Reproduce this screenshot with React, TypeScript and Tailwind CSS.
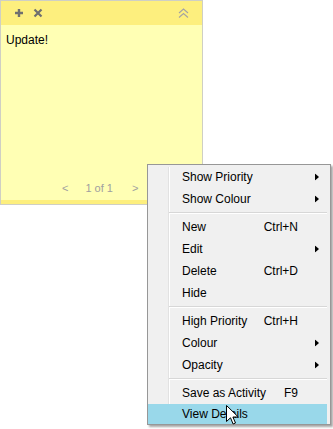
import React from 'react';

type MenuItem = { label: string; shortcut?: string; submenu?: boolean; active?: boolean } | 'sep';

const items: MenuItem[] = [
  { label: 'Show Priority', submenu: true },
  { label: 'Show Colour', submenu: true },
  'sep',
  { label: 'New', shortcut: 'Ctrl+N' },
  { label: 'Edit', submenu: true },
  { label: 'Delete', shortcut: 'Ctrl+D' },
  { label: 'Hide' },
  'sep',
  { label: 'High Priority', shortcut: 'Ctrl+H' },
  { label: 'Colour', submenu: true },
  { label: 'Opacity', submenu: true },
  'sep',
  { label: 'Save as Activity', shortcut: 'F9' },
  { label: 'View Details', active: true },
];

const StickyNote = () => (
  <div className="w-[203px] h-[205px] border border-[#cfcfc4] flex flex-col">
    {/* header bar */}
    <div className="h-[24px] bg-[#fdef7e] flex items-center px-[12px] shrink-0">
      <svg width="10" height="10" viewBox="0 0 10 10" className="ml-[1px]">
        <path d="M5 1v8M1 5h8" stroke="#6f6f6f" strokeWidth="2.4" />
      </svg>
      <svg width="10" height="10" viewBox="0 0 10 10" className="ml-[9px]">
        <path d="M1.5 1.5l7 7M8.5 1.5l-7 7" stroke="#6f6f6f" strokeWidth="2.2" />
      </svg>
      <svg width="11" height="10" viewBox="0 0 11 10" className="ml-auto mr-[1px]">
        <path d="M1 5l4.5-4 4.5 4M1 9.5l4.5-4 4.5 4" stroke="#a3a3a3" strokeWidth="1.1" fill="none" />
      </svg>
    </div>
    <div className="flex-1 bg-[#ffffb4] flex flex-col">
      <div className="px-[5px] pt-[8px] text-[12px] leading-[14px] text-black">Update!</div>
      <div className="mt-auto mb-[5px] flex items-center text-[11px] leading-[14px] text-[#a0a0a0] pl-[61px]">
        <span>&lt;</span>
        <span className="ml-[17px]">1 of 1</span>
        <span className="ml-[19px]">&gt;</span>
      </div>
    </div>
    <div className="h-[4px] bg-[#fdef7e] shrink-0" />
  </div>
);

const ContextMenu = () => (
  <div className="absolute left-[147px] top-[164px] w-[184px] h-[261px] bg-[#f0f0f0] border border-[#979797] shadow-[2px_2px_2px_rgba(0,0,0,0.35)] pt-[1px] pr-[3px]">
    {/* icon gutter divider */}
    <div className="absolute left-[20px] top-[2px] bottom-[2px] w-[2px] border-l border-[#e2e2e2] border-r border-r-white" />
    {items.map((item, i) =>
      item === 'sep' ? (
        <div key={i} className="h-[6px] flex items-center pl-[21px] relative">
          <div className="w-full h-[2px] border-t border-[#d7d7d7] border-b border-b-white" />
        </div>
      ) : (
        <div
          key={i}
          className={
            'relative flex items-center text-[12px] text-black pl-[34px] pr-[29px] ' +
            (item.active ? 'h-[20px] bg-[#99d8ea]' : 'h-[22px]')
          }
        >
          <span className="flex-1 whitespace-nowrap">{item.label}</span>
          {item.shortcut && <span className="whitespace-nowrap">{item.shortcut}</span>}
          {item.submenu && (
            <svg width="4" height="7" viewBox="0 0 4 7" className="absolute left-[167px] top-1/2 -translate-y-1/2">
              <path d="M0 0l4 3.5L0 7z" fill="#000" />
            </svg>
          )}
        </div>
      )
    )}
  </div>
);

const Cursor = () => (
  <svg width="13" height="21" viewBox="0 0 13 21" className="absolute left-[226px] top-[405px]">
    <path d="M0.5 0.5v16l4-3.7 2.6 6.2 2.4-1-2.6-6h5.4z" fill="#fff" stroke="#000" strokeWidth="1" strokeLinejoin="round" />
  </svg>
);

export default function App() {
  return (
    <div className="relative w-[333px] h-[429px] bg-white overflow-hidden" style={{ fontFamily: '"Liberation Sans", Arial, sans-serif' }}>
      <StickyNote />
      <ContextMenu />
      <Cursor />
    </div>
  );
}
